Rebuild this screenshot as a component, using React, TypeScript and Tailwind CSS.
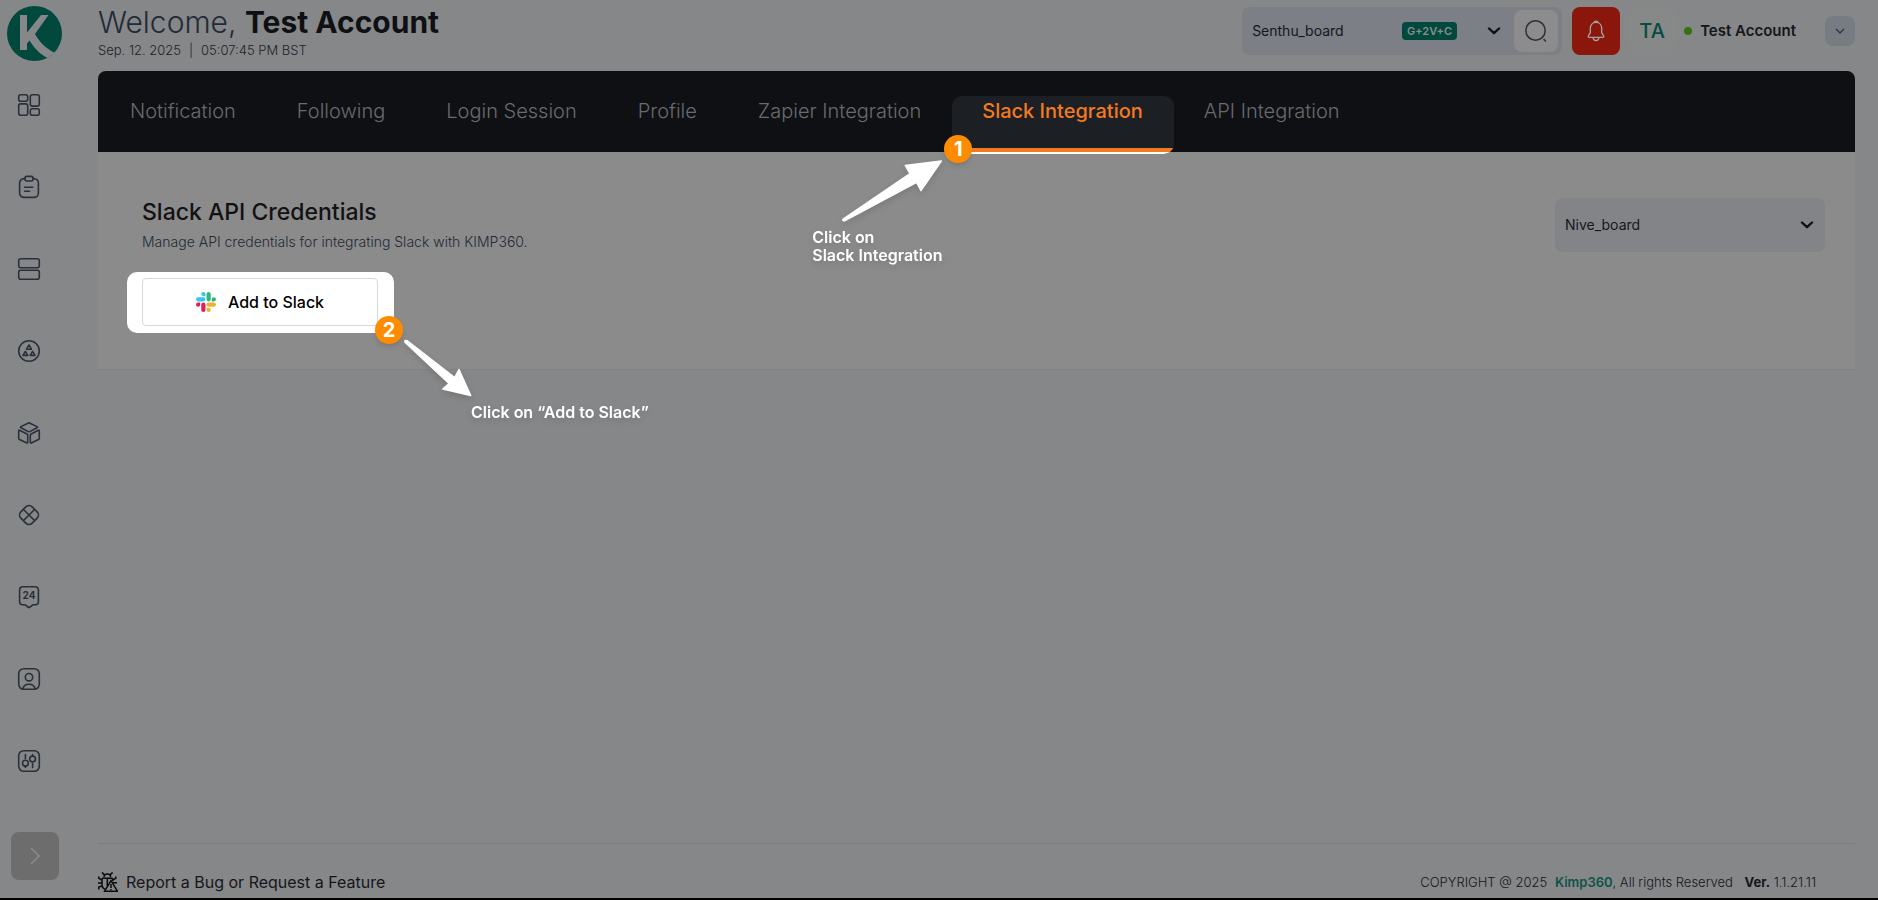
import type { ReactNode } from "react";

const TABS = [
  "Notification",
  "Following",
  "Login Session",
  "Profile",
  "Zapier Integration",
  "Slack Integration",
  "API Integration",
];

const ACTIVE_TAB = "Slack Integration";

function NavIcon({ children }: { children: ReactNode }) {
  return (
    <svg
      width="24"
      height="24"
      viewBox="0 0 24 24"
      fill="none"
      stroke="currentColor"
      strokeWidth="1.6"
      strokeLinecap="round"
      strokeLinejoin="round"
      aria-hidden="true"
    >
      {children}
    </svg>
  );
}

const NAV_ITEMS: { label: string; icon: ReactNode }[] = [
  {
    label: "Dashboard",
    icon: (
      <>
        <rect x="1.7" y="1.7" width="9" height="6.6" rx="2" />
        <rect x="13.3" y="1.7" width="9" height="11.4" rx="2" />
        <rect x="1.7" y="10.9" width="9" height="11.4" rx="2" />
        <rect x="13.3" y="15.7" width="9" height="6.6" rx="2" />
      </>
    ),
  },
  {
    label: "Requests",
    icon: (
      <>
        <path d="M8 3.6H7a4.4 4.4 0 0 0-4.4 4.4v10A4.4 4.4 0 0 0 7 22.4h10a4.4 4.4 0 0 0 4.4-4.4V8A4.4 4.4 0 0 0 17 3.6h-1" />
        <rect x="8" y="1.4" width="8" height="4.6" rx="1.6" />
        <path d="M7.6 12.2h8.2M7.6 16.2h5" />
      </>
    ),
  },
  {
    label: "Boards",
    icon: (
      <>
        <rect x="1.7" y="1.7" width="20.6" height="9" rx="2" />
        <rect x="1.7" y="13.3" width="20.6" height="9" rx="2" />
      </>
    ),
  },
  {
    label: "Brands",
    icon: (
      <>
        <circle cx="12" cy="12" r="10.3" />
        <path d="M12 6l2.4 4.200H9.600zM8.400 12.400l2.400 4H6zM15.600 12.400l2.400 4h-4.800z" />
      </>
    ),
  },
  {
    label: "Assets",
    icon: (
      <>
        <path d="M12 1.7L20 5.6q1 .6 0 1.2L12.8 10.6q-.8.4-1.6 0L4 6.8q-1-.6 0-1.2z" />
        <path d="M1.7 9.9q0-1 .9-.6l7.3 3.7q.8.4.8 1.3v7q0 1-.9.6L2.5 18.500q-.8-.4-.8-1.300z" />
        <path d="M22.3 9.9q0-1-.9-.6l-7.3 3.7q-.8.4-.8 1.3v7q0 1 .9.6l7.3-3.400q.8-.4.8-1.300z" />
      </>
    ),
  },
  {
    label: "Integrations",
    icon: (
      <>
        <rect x="4" y="4" width="16" height="16" rx="4.500" transform="rotate(45 12 12)" />
        <path d="M6.500 6.500l11 11M17.500 6.500l-11 11" />
      </>
    ),
  },
  {
    label: "Calendar",
    icon: (
      <>
        <path d="M5.600 1.700h12.800a3 3 0 0 1 3 3v12a3 3 0 0 1-3 3h-2.200L13 22q-1 .7-2 0l-3.200-2.300H5.600a3 3 0 0 1-3-3v-12a3 3 0 0 1 3-3z" />
        <text
          x="12"
          y="14.2"
          textAnchor="middle"
          fontSize="10"
          fontWeight="700"
          fill="currentColor"
          stroke="none"
        >
          24
        </text>
      </>
    ),
  },
  {
    label: "Account",
    icon: (
      <>
        <rect x="1.7" y="1.7" width="20.6" height="20.6" rx="5" />
        <circle cx="12" cy="10.2" r="3.7" />
        <path d="M6 22c.4-3.2 2.8-4.8 6-4.8s5.6 1.600 6 4.800" />
      </>
    ),
  },
  {
    label: "Settings",
    icon: (
      <>
        <rect x="1.7" y="1.7" width="20.6" height="20.6" rx="5" />
        <circle cx="8.4" cy="14.2" r="2.9" />
        <circle cx="15.6" cy="10" r="2.9" />
        <path d="M8.400 5.600v3.900M8.400 17.100v1.400M15.600 5.600v1.500M15.600 14.500v4" />
      </>
    ),
  },
];

function KimpLogo() {
  return (
    <svg width="55" height="55" viewBox="0 0 55 55" aria-hidden="true">
      <circle cx="27.5" cy="27.5" r="27.5" fill="#00493c" />
      <path
        d="M13 9h7v17.500L34 9h7.500L28 28c4.500 8 11 15 20 18.700L40.500 52C32 48 26 40 22.500 34.500L20 37.500V44h-7z"
        fill="#868789"
      />
    </svg>
  );
}

function SlackMark() {
  return (
    <svg width="20" height="20" viewBox="0 0 24 24" aria-hidden="true">
      <path
        fill="#E01E5A"
        d="M5.042 15.165a2.528 2.528 0 0 1-2.520 2.523A2.528 2.528 0 0 1 0 15.165a2.527 2.527 0 0 1 2.522-2.520h2.520v2.520zM6.313 15.165a2.527 2.527 0 0 1 2.521-2.520 2.527 2.527 0 0 1 2.521 2.520v6.313A2.528 2.528 0 0 1 8.834 24a2.528 2.528 0 0 1-2.521-2.522v-6.313z"
      />
      <path
        fill="#36C5F0"
        d="M8.834 5.042a2.528 2.528 0 0 1-2.521-2.520A2.528 2.528 0 0 1 8.834 0a2.528 2.528 0 0 1 2.521 2.522v2.520H8.834zM8.834 6.313a2.528 2.528 0 0 1 2.521 2.521 2.528 2.528 0 0 1-2.521 2.521H2.522A2.528 2.528 0 0 1 0 8.834a2.528 2.528 0 0 1 2.522-2.521h6.312z"
      />
      <path
        fill="#2EB67D"
        d="M18.956 8.834a2.528 2.528 0 0 1 2.522-2.521A2.528 2.528 0 0 1 24 8.834a2.528 2.528 0 0 1-2.522 2.521h-2.522V8.834zM17.688 8.834a2.528 2.528 0 0 1-2.523 2.521 2.527 2.527 0 0 1-2.520-2.521V2.522A2.527 2.527 0 0 1 15.165 0a2.528 2.528 0 0 1 2.523 2.522v6.312z"
      />
      <path
        fill="#ECB22E"
        d="M15.165 18.956a2.528 2.528 0 0 1 2.523 2.522A2.528 2.528 0 0 1 15.165 24a2.527 2.527 0 0 1-2.520-2.522v-2.522h2.520zM15.165 17.688a2.527 2.527 0 0 1-2.520-2.523 2.526 2.526 0 0 1 2.520-2.520h6.313A2.527 2.527 0 0 1 24 15.165a2.528 2.528 0 0 1-2.522 2.523h-6.313z"
      />
    </svg>
  );
}

function BugIcon() {
  return (
    <svg
      width="20"
      height="20"
      viewBox="0 0 20 20"
      fill="none"
      stroke="#0b0b0c"
      strokeWidth="1.5"
      aria-hidden="true"
    >
      <path d="M6 5.200C6 3 7.400 2 9.300 2s3.300 1 3.300 3.200M6.200 2.600L4 .4M12.400 2.600L14.600.4" />
      <path d="M4 6.200h10.600M4 6.200v6.300c0 2.500 1.400 4.300 3.600 4.900M14.600 6.200v3M9.300 6.200v8" />
      <path d="M4 8L.8 6.400V4.600M4 11H0M4 14l-3.200 1v2.400M14.600 8l3.200-1.600V4.600M14.600 10.800h4.400" />
      <path d="M13 8.600L6.600 19.200h12.800z" />
      <path d="M13 12v4M13 17v1.200" />
    </svg>
  );
}

function Caret() {
  return (
    <svg
      width="14"
      height="8"
      viewBox="0 0 14 8"
      fill="none"
      stroke="#0f1013"
      strokeWidth="2.4"
      strokeLinecap="round"
      strokeLinejoin="round"
      aria-hidden="true"
      className="pointer-events-none"
    >
      <path d="M2 1.500l5 4.700 5-4.700" />
    </svg>
  );
}

function StepBadge({ children }: { children: ReactNode }) {
  return (
    <span className="flex size-7 items-center justify-center rounded-full bg-[#ff8c00] text-xl font-bold text-white shadow-md">
      {children}
    </span>
  );
}

function Sidebar() {
  return (
    <aside className="flex w-[98px] shrink-0 flex-col pb-[18px] pt-[6px]">
      <a href="/" aria-label="Kimp360 home" className="ml-[7px] w-fit">
        <KimpLogo />
      </a>
      <nav className="mt-8 flex flex-col gap-[58px] pl-[17px] text-[#2a303a]">
        {NAV_ITEMS.map((item) => (
          <a key={item.label} href="#" aria-label={item.label} className="w-fit">
            <NavIcon>{item.icon}</NavIcon>
          </a>
        ))}
      </nav>
      <button
        type="button"
        aria-label="Expand menu"
        className="ml-[11px] mt-auto flex size-12 items-center justify-center rounded-lg bg-[#6d6d6d]"
      >
        <svg width="10" height="18" viewBox="0 0 10 18" fill="none" stroke="#8f8f8f" aria-hidden="true">
          <path d="M1 1l8 8-8 8" strokeWidth="1.4" />
        </svg>
      </button>
    </aside>
  );
}

function Header() {
  return (
    <header className="flex h-[71px] items-start justify-between">
      <div className="pt-1">
        <h1 className="text-[30px] leading-[36px] text-[#0f1013]">
          <span className="font-light text-[#232a36]">Welcome, </span>
          <span className="font-bold">Test Account</span>
        </h1>
        <p className="flex gap-2 text-[13px] font-light leading-5 text-[#1b1f27]">
          <span>Sep. 12. 2025</span>
          <span>|</span>
          <span>05:07:45 PM BST</span>
        </p>
      </div>

      <div className="flex items-center pt-[7px]">
        <div className="flex h-12 w-80 items-center rounded-lg bg-[#7c7f85] pr-1">
          <div className="relative flex h-full flex-1 items-center">
            <select
              aria-label="Board"
              className="h-full w-full appearance-none bg-transparent pl-[10px] text-sm text-[#14171c]"
            >
              <option>Senthu_board</option>
            </select>
            <span className="pointer-events-none absolute right-[57px] rounded bg-[#00493c] px-[5px] text-[11px] font-semibold leading-[18px] text-[#8c8c8c]">
              G+2V+C
            </span>
            <span className="pointer-events-none absolute right-[13px]">
              <Caret />
            </span>
          </div>
          <button
            type="button"
            aria-label="Search"
            className="flex h-[42px] w-11 items-center justify-center rounded-lg bg-[#8c8c8c]"
          >
            <svg width="22" height="22" viewBox="0 0 22 22" fill="none" stroke="#2a303a" aria-hidden="true">
              <circle cx="10.5" cy="10.5" r="9.7" strokeWidth="1.5" />
              <path d="M18.600 19l2.200 2.400" strokeWidth="1.5" />
            </svg>
          </button>
        </div>

        <button
          type="button"
          aria-label="Notifications"
          className="ml-[10px] flex size-12 items-center justify-center rounded-lg bg-[#8b160c]"
        >
          <svg
            width="18"
            height="22"
            viewBox="0 0 18 22"
            fill="none"
            stroke="#a7a2a2"
            strokeWidth="1.3"
            strokeLinejoin="round"
            aria-hidden="true"
          >
            <path d="M7 2.800C7 .6 11 .6 11 2.800" />
            <path d="M9 2.400c-3.500 0-5.700 2.500-5.700 6v4.200L1.400 15.800c-.4.900.1 1.500.9 1.500h13.400c.8 0 1.300-.6.9-1.500L14.700 12.600V8.400c0-3.500-2.200-6-5.700-6z" />
            <path d="M6 17.600c.4 2 1.500 3 3 3s2.600-1 3-3" />
          </svg>
        </button>

        <span className="ml-2 flex size-12 items-center justify-center rounded-lg bg-[#878888] text-xl font-medium text-[#064d40]">
          TA
        </span>
        <span className="ml-2 size-2 rounded-full bg-[#37700f]" />
        <span className="ml-2 text-[15px] font-semibold leading-6 text-[#14161a]">Test Account</span>
        <button
          type="button"
          aria-label="Account menu"
          className="ml-[29px] flex size-[30px] items-center justify-center rounded-lg bg-[#777b82]"
        >
          <svg width="10" height="6" viewBox="0 0 10 6" fill="none" stroke="#2a303a" aria-hidden="true">
            <path d="M1 1l4 4 4-4" strokeWidth="1.2" />
          </svg>
        </button>
      </div>
    </header>
  );
}

function ActiveTab({ label }: { label: string }) {
  return (
    <div className="relative -mb-[2px]">
      <a
        href="#"
        aria-current="page"
        className="flex h-[58px] flex-col overflow-hidden rounded-[10px] bg-[#1c1f23] font-medium text-[#f47a20]"
      >
        <span className="flex-1 pl-[30px] pr-[31px]">{label}</span>
        <span className="h-1 bg-[#f47a20]" />
        <span className="h-[2px] bg-white" />
      </a>

      {/* Step 1 callout */}
      <div className="absolute -left-2 top-[39px] z-10">
        <StepBadge>1</StepBadge>
      </div>
      <div className="absolute -left-[140px] top-[62px] z-10 w-max text-base font-semibold leading-[18px] text-white">
        <svg
          width="134"
          height="70"
          viewBox="0 0 134 70"
          fill="#fff"
          stroke="#fff"
          strokeWidth="1.5"
          strokeLinejoin="round"
          className="drop-shadow-md"
          aria-hidden="true"
        >
          <path d="M31.200 61L98 15.700L93.300 7.500L129.300 3L109 32.700L104.600 24.300L33 62.700Q30 63 31.200 61Z" />
        </svg>
        <p className="drop-shadow-md">
          Click on
          <br />
          Slack Integration
        </p>
      </div>
    </div>
  );
}

function SettingsTabs() {
  return (
    <nav className="flex h-[81px] items-start rounded-t-lg bg-[#0f1013] pl-[2px] pt-[25px] text-xl leading-[30px] text-[#696a6d]">
      {TABS.map((tab) =>
        tab === ACTIVE_TAB ? (
          <ActiveTab key={tab} label={tab} />
        ) : (
          <a key={tab} href="#" className="pl-[30px] pr-[31px] font-light">
            {tab}
          </a>
        ),
      )}
    </nav>
  );
}

function SlackPanel() {
  return (
    <section className="flex items-start justify-between border-b border-[#838383] bg-[#8b8b8b] pb-9 pl-[29px] pr-[30px] pt-[46px]">
      <div>
        <div className="pl-[15px]">
          <h2 className="text-[23px] font-medium leading-7 text-[#111214]">Slack API Credentials</h2>
          <p className="mt-[6px] text-sm font-light leading-5 text-[#232a36]">
            Manage API credentials for integrating Slack with KIMP360.
          </p>
        </div>
        <div className="relative mt-5 w-fit rounded-[10px] bg-white pb-[7px] pl-[15px] pr-4 pt-[6px]">
          <button
            type="button"
            className="flex h-12 w-[236px] items-center justify-center gap-3 rounded border border-[#d9d9d9] bg-white text-base font-medium text-black"
          >
            <SlackMark />
            Add to Slack
          </button>

          {/* Step 2 callout */}
          <div className="absolute -bottom-[11px] -right-[9px]">
            <StepBadge>2</StepBadge>
          </div>
          <div className="absolute left-[274px] top-[64px] w-max text-base font-semibold leading-6 text-white">
            <svg
              width="76"
              height="64"
              viewBox="0 0 76 64"
              fill="#fff"
              stroke="#fff"
              strokeWidth="1.5"
              strokeLinejoin="round"
              className="drop-shadow-md"
              aria-hidden="true"
            >
              <path d="M4 6.200Q3.200 3.800 6 4.700L53.700 41.500L58 33.500L69.700 59.600L41.800 53L48 47.500Z" />
            </svg>
            <p className="pl-[70px] drop-shadow-md">Click on “Add to Slack”</p>
          </div>
        </div>
      </div>

      <div className="relative flex h-[54px] w-[270px] items-center">
        <select
          aria-label="Slack board"
          className="h-full w-full appearance-none rounded-lg bg-[#838487] pl-[10px] text-sm text-[#14171c]"
        >
          <option>Nive_board</option>
        </select>
        <span className="pointer-events-none absolute right-[11px]">
          <Caret />
        </span>
      </div>
    </section>
  );
}

function Footer() {
  return (
    <footer className="mt-auto flex h-[55px] items-center justify-between border-t border-[#7a7b7e] pr-[39px] pt-[21px] text-[#14161a]">
      <a href="#" className="flex items-center gap-2 text-base leading-6">
        <BugIcon />
        Report a Bug or Request a Feature
      </a>
      <p className="text-[13px] font-light leading-6">
        COPYRIGHT @ 2025{" "}
        <a href="#" className="ml-1 font-semibold text-[#0d5449]">
          Kimp360
        </a>
        , All rights Reserved <span className="ml-2 font-bold">Ver.</span> 1.1.21.11
      </p>
    </footer>
  );
}

export default function App() {
  return (
    <div className="flex min-h-screen border-b-2 border-black bg-[#868789] font-['Inter','Liberation_Sans',sans-serif]">
      <Sidebar />
      <main className="mr-[23px] flex min-w-0 flex-1 flex-col">
        <Header />
        <SettingsTabs />
        <SlackPanel />
        <Footer />
      </main>
    </div>
  );
}
